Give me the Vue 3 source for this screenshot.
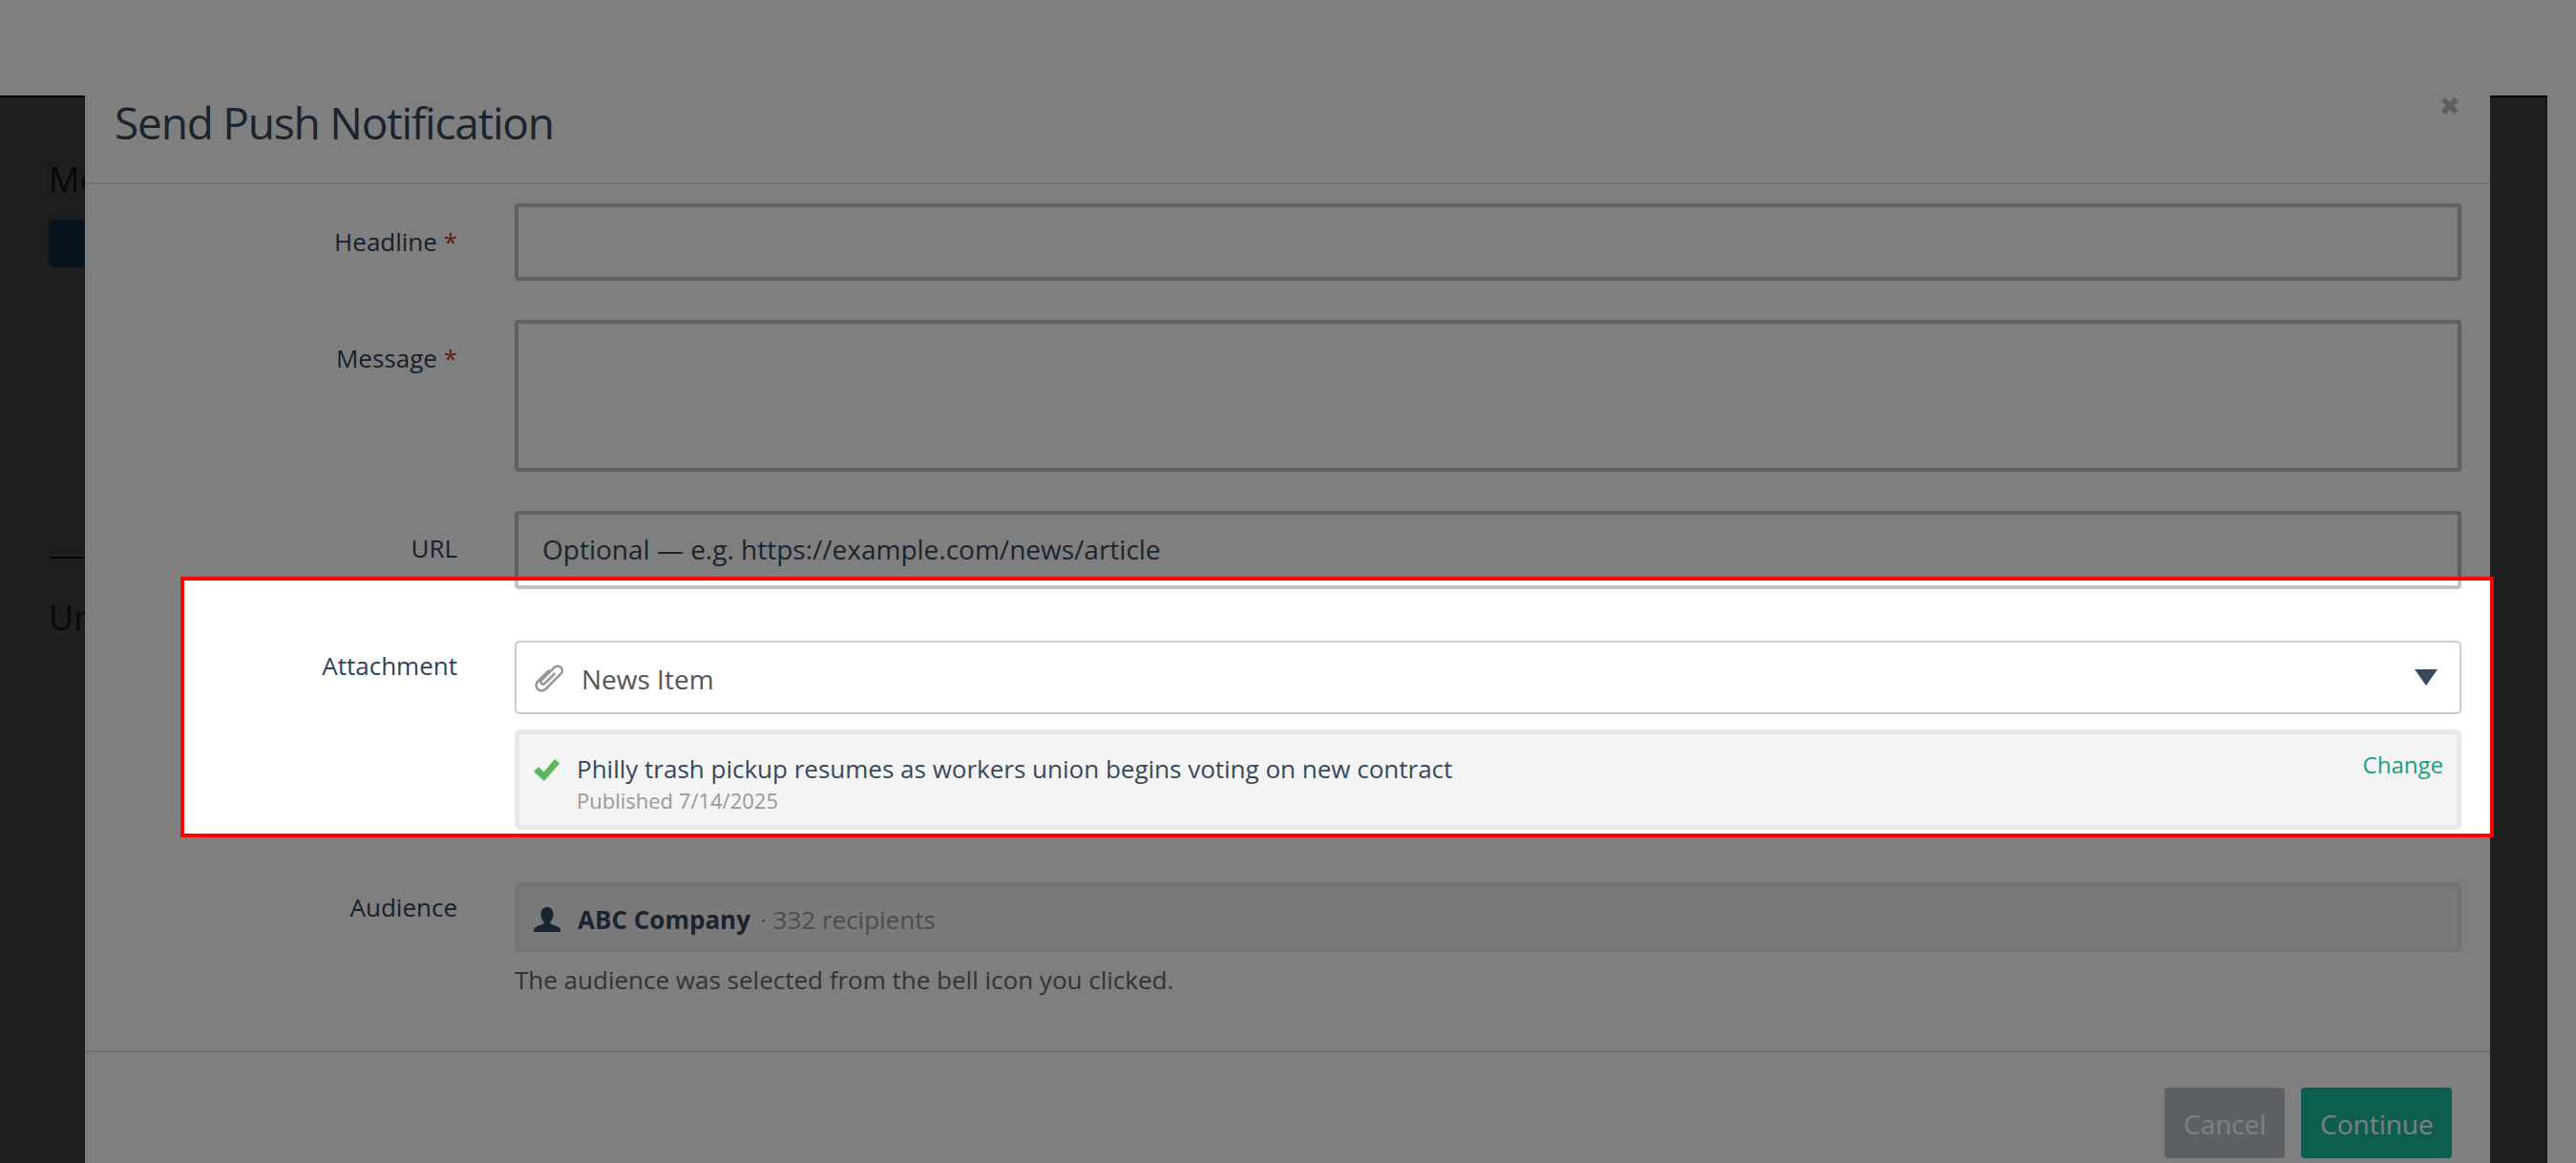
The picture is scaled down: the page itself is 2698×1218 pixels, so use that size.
<script setup>
const title = 'Send Push Notification'
</script>

<template>
  <div class="page">
    <div class="backdrop">
      <h2 class="bg-title">Messages</h2>
      <div class="bg-btn"></div>
      <div class="bg-rule"></div>
      <h2 class="bg-title second">Unread</h2>
    </div>

    <section class="modal">
      <header class="modal-head">
        <h1 class="title">{{ title }}</h1>
        <svg class="close" viewBox="0 0 20 20"><path d="M3 3 17 17M17 3 3 17" /></svg>
      </header>

      <form class="form" @submit.prevent>
        <label class="label tall">Headline <span class="req">*</span></label>
        <input class="input headline" type="text" />

        <label class="label tall">Message <span class="req">*</span></label>
        <textarea class="input message"></textarea>

        <label class="label tall url-label">URL</label>
        <input class="input url" type="text" placeholder="Optional — e.g. https://example.com/news/article" />

        <label class="label short">Attachment</label>
        <div class="attach">
          <div class="select">
            <svg class="clip" viewBox="0 0 30 28" fill="none">
              <path transform="translate(15 14) rotate(45) scale(.95 .95) translate(-14 -13.500)" d="M15 5V21a2.500 2.500 0 0 1-5 0V1a5 5 0 0 1 10 0V25a6 6 0 0 1-12 0V7" />
            </svg>
            <span class="select-text">News Item</span>
            <svg class="caret" viewBox="0 0 24 17"><path d="M0 0H24L12 17Z" /></svg>
          </div>
          <div class="item">
            <svg class="check" viewBox="0 0 27 23"><path d="M0 13 5 8 10.500 13.500 22 0 27 4.500 11 23Z" /></svg>
            <div class="item-body">
              <div class="item-title">Philly trash pickup resumes as workers union begins voting on new contract</div>
              <div class="item-sub">Published 7/14/2025</div>
            </div>
            <a class="change">Change</a>
          </div>
        </div>

        <label class="label short audience-label">Audience</label>
        <div class="audience-wrap">
          <div class="audience">
            <svg class="user" viewBox="0 0 28 26"><path d="M14 0c4 0 6.500 3 6.500 7.500 0 3.300-1.300 6-3 7.500v2.500c3.500 1.500 10.500 3 10.500 6.500V26H0v-2c0-3.500 7-5 10.500-6.500V15c-1.700-1.500-3-4.200-3-7.500C7.500 3 10 0 14 0Z" /></svg>
            <strong class="company">ABC Company</strong>
            <span class="recipients">· 332 recipients</span>
          </div>
          <p class="help">The audience was selected from the bell icon you clicked.</p>
        </div>
      </form>

      <footer class="modal-foot">
        <button class="btn cancel" type="button">Cancel</button>
        <button class="btn continue" type="button">Continue</button>
      </footer>
    </section>

    <div class="spotlight"></div>
  </div>
</template>

<style>
html, body { margin: 0; background: #fff; overflow: hidden; }
</style>

<style scoped>
.page {
  position: relative;
  height: 1218px;
  padding: 100px 30px 0 0;
  box-sizing: border-box;
  overflow: hidden;
  background: #fff;
  font-family: "Open Sans", "Noto Sans", sans-serif;
}
.backdrop {
  height: 100%;
  box-sizing: border-box;
  padding: 64px 0 0 51px;
  background: #3c3c3c;
  border-top: 2px solid #000;
  color: #111;
}
.bg-title { margin: 0; font-size: 36px; font-weight: 400; line-height: 44px; white-space: nowrap; }
.bg-btn { width: 200px; height: 50px; margin-top: 20px; border-radius: 6px; background: #10263a; }
.bg-rule { width: 200px; height: 2px; margin-top: 303px; background: #111; }
.bg-title.second { margin-top: 40px; }

.modal {
  position: absolute;
  top: 100px;
  left: 89px;
  width: 2519px;
  height: 1118px;
  background: #fff;
}
.modal-head {
  position: relative;
  height: 91px;
  border-bottom: 2px solid #e5e5e5;
}
.title {
  margin: 0;
  padding: 3px 0 0 31px;
  font-size: 46px;
  letter-spacing: -1.200px;
  line-height: 50px;
  font-weight: 400;
  color: #34495e;
  white-space: nowrap;
}
.close {
  position: absolute;
  top: 1px;
  right: 32px;
  width: 20px;
  height: 20px;
  fill: none;
  stroke: #bebebe;
  stroke-width: 6;
}
.form {
  display: grid;
  grid-template-columns: 390px 2039px;
  column-gap: 60px;
  padding-top: 20px;
  color: #34495e;
}
.label {
  text-align: right;
  font-size: 26px;
  line-height: 36px;
  color: #2f4358;
}
.label.tall { padding-top: 22px; }
.label.tall.url-label { padding-top: 21px; }
.label.short { padding-top: 8px; }
.req { color: #c0392b; }
.input {
  display: block;
  width: 100%;
  box-sizing: border-box;
  margin: 0;
  border: 4px solid #bdc3c7;
  border-radius: 4px;
  padding: 0 25px;
  background: #fff;
  font: inherit;
  font-size: 28px;
  color: #34495e;
  outline: none;
  resize: none;
}
.input::placeholder { color: #34495e; opacity: 1; }
.headline { height: 81px; margin-bottom: 41px; }
.message { height: 159px; margin-bottom: 41px; }
.url { height: 82px; margin-bottom: 54px; padding-bottom: 2px; }
.attach { margin-bottom: 55px; }
.select {
  display: flex;
  align-items: center;
  height: 77px;
  box-sizing: border-box;
  padding: 0 23px 0 19px;
  border: 2px solid #ccc;
  border-radius: 5px;
  background: #fff;
}
.clip { width: 30px; height: 28px; margin-right: 19px; stroke: #999; stroke-width: 2.800; overflow: visible; }
.select-text { flex: 1; padding-top: 2px; font-size: 28px; line-height: 40px; color: #555; }
.caret { width: 24px; height: 17px; fill: #34495e; }
.item {
  display: flex;
  align-items: flex-start;
  height: 105px;
  box-sizing: border-box;
  margin-top: 16px;
  padding: 19px 14px 0 15px;
  border: 5px solid #e8e8e8;
  border-radius: 6px;
  background: #f4f4f4;
}
.check { width: 27px; height: 23px; margin: 7px 18px 0 0; fill: #5cb85c; flex: none; }
.item-body { flex: 1; }
.item-title { font-size: 26px; line-height: 34px; color: #34495e; }
.item-sub { margin-top: 1px; font-size: 22px; line-height: 30px; color: #999; }
.change { font-size: 24px; line-height: 34px; color: #16a085; margin-top: -4px; }
.audience {
  display: flex;
  align-items: center;
  height: 73px;
  box-sizing: border-box;
  padding: 5px 20px 0 15px;
  border: 5px solid #e8e8e8;
  border-radius: 6px;
  background: #f4f4f4;
}
.user { width: 28px; height: 26px; margin-right: 18px; fill: #34495e; }
.company { font-size: 26px; font-weight: 700; color: #34495e; }
.recipients { margin-left: 10px; font-size: 26px; color: #999; }
.help { margin: 11px 0 0; font-size: 26px; line-height: 36px; color: #666; }

.modal-foot {
  position: absolute;
  top: 1000px;
  left: 0;
  right: 0;
  display: flex;
  justify-content: flex-end;
  gap: 17px;
  box-sizing: border-box;
  height: 118px;
  padding: 37px 40px 0 0;
  border-top: 2px solid #e5e5e5;
}
.btn {
  height: 74px;
  border: 0;
  border-radius: 4px;
  padding: 2px 20px 0;
  font: inherit;
  font-size: 28px;
  color: #fff;
}
.cancel { width: 126px; background: #bdc3c7; }
.continue { width: 158px; background: #1abc9c; }

.spotlight {
  position: absolute;
  top: 604px;
  left: 189px;
  width: 2423px;
  height: 273px;
  box-sizing: border-box;
  border: 4px solid #f00;
  box-shadow: 0 0 0 4000px rgba(0, 0, 0, 0.5);
}
</style>
